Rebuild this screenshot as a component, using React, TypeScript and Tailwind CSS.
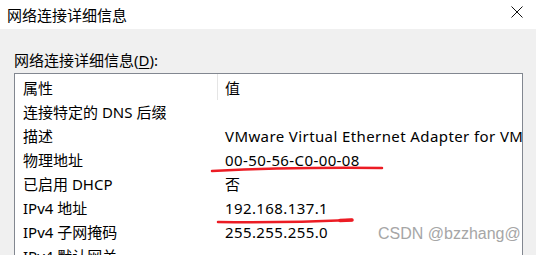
import React from "react";

const rows = [
  { name: "连接特定的 DNS 后缀", value: "" },
  { name: "描述", value: "VMware Virtual Ethernet Adapter for VMnet1" },
  { name: "物理地址", value: "00-50-56-C0-00-08" },
  { name: "已启用 DHCP", value: "否" },
  { name: "IPv4 地址", value: "192.168.137.1" },
  { name: "IPv4 子网掩码", value: "255.255.255.0" },
  { name: "IPv4 默认网关", value: "" },
];

export default function App() {
  return (
    <div
      className="relative w-[536px] h-[255px] overflow-hidden bg-[#f0f0f0] text-black"
      style={{ fontFamily: '"Noto Sans", "Noto Sans CJK SC", sans-serif' }}
    >
      {/* Title bar */}
      <div className="h-[29px] bg-white flex items-center justify-between pl-[7px] pr-[13px]">
        <span className="text-[15px] leading-[20px]">网络连接详细信息</span>
        <svg width="12" height="12" viewBox="0 0 12 12" className="mb-[5px]">
          <path d="M0.5 0.5 L11.5 11.5 M11.5 0.5 L0.5 11.5" stroke="#111" strokeWidth="1" />
        </svg>
      </div>

      {/* Body */}
      <div className="px-[14px] pt-[21px]">
        <div className="text-[15px] leading-[20px]">
          网络连接详细信息(<span className="underline underline-offset-2">D</span>):
        </div>

        <div className="mt-[3px] w-[509px] h-[200px] bg-white border border-b-0 border-[#828790]">
          {/* Header */}
          <div className="h-[28px] flex text-[15px] leading-[20px]">
            <div className="w-[202px] pl-[8px] pt-[4px]">属性</div>
            <div className="w-px h-[26px] bg-[#e5e5e5]" />
            <div className="pl-[7px] pt-[4px]">值</div>
          </div>

          {/* Rows */}
          {rows.map((r) => (
            <div key={r.name} className="h-[24px] flex text-[15px] leading-[20px] whitespace-nowrap">
              <div className="w-[203px] pl-[8px] shrink-0">{r.name}</div>
              <div className="pl-[7px] overflow-hidden tracking-[0.4px]">{r.value}</div>
            </div>
          ))}
        </div>
      </div>

      {/* Red hand-drawn underlines */}
      <svg className="absolute left-0 top-0 pointer-events-none" width="536" height="255">
        <path d="M212 171 Q 290 167 382 168" stroke="#ec1c24" strokeWidth="2.5" fill="none" strokeLinecap="round" />
        <path d="M218 222 Q 285 223 352 220" stroke="#ec1c24" strokeWidth="2.5" fill="none" strokeLinecap="round" />
        <path d="M340 220.5 L352 220" stroke="#ec1c24" strokeWidth="3.5" fill="none" strokeLinecap="round" />
      </svg>

      {/* Watermark */}
      <div
        className="absolute left-[378px] top-[224px] text-[16px] leading-[20px] text-[#a6a6a6] whitespace-nowrap"
        style={{ fontFamily: '"Liberation Sans", Arial, sans-serif' }}
      >
        CSDN @bzzhang@
      </div>
    </div>
  );
}
